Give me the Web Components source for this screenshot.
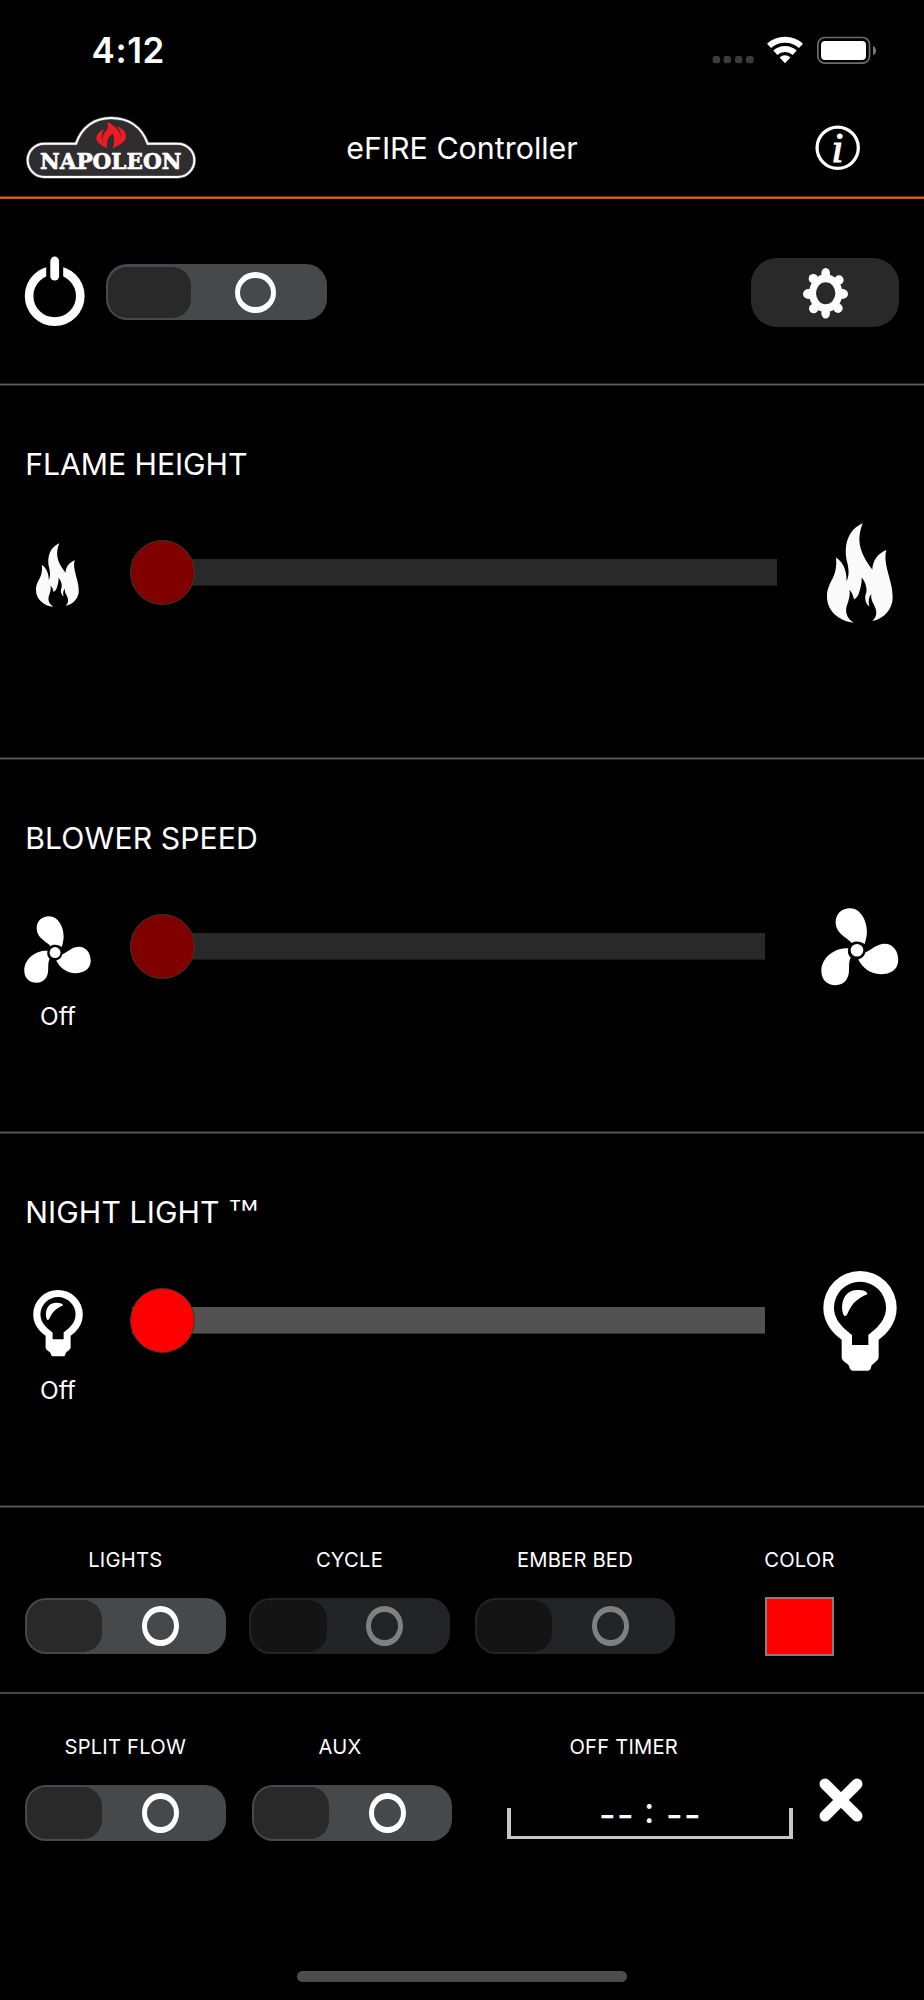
<!DOCTYPE html>
<html lang="en">
<head>
<meta charset="utf-8">
<title>eFIRE Controller</title>
<style>
html,body{margin:0;background:#000}
body{width:924px;height:2000px;overflow:hidden;font-family:Inter,"Liberation Sans",sans-serif;color:#fff}
</style>
</head>
<body>
<efire-app></efire-app>
<script>
const define = (name, html, setup) => customElements.define(name, class extends HTMLElement {
  constructor() {
    super();
    const t = document.createElement('template');
    t.innerHTML = html;
    this.attachShadow({mode: 'open'}).append(t.content.cloneNode(true));
  }
  connectedCallback() { if (setup) setup(this); }
});

const ICONS = {
  flame: ['309 66 198 301', '<path fill="#fafafa" d="M416 67C400 110 400 148 445 206C446 180 460 158 487 147C475 190 507 240 506 290C506 325 480 354 445 361C462 345 458 330 450 312C444 302 440 292 442 280C434 290 432 302 436 317C424 308 420 290 427 275C430 260 422 240 413 230C414 250 408 265 405 277C402 287 396 293 390 296C388 285 384 275 376 267C380 285 373 300 367 320C364 340 372 355 389 366C345 362 309 330 309 288C309 240 342 235 336 170C355 182 368 205 368 241C375 225 375 210 371 190C355 130 375 85 416 67Z"/>'],
  fan: ['291 82 233 233', '<path d="M383 187C372 172 335 160 335 125C335 100 353 83 378 83C412 83 430 125 429 155C428 170 425 182 422 190C410 181 393 180 383 187ZM424 216C445 205 460 189 482 189C508 189 523 212 523 238C523 266 500 281 470 281C440 281 415 262 403 237C415 233 422 226 424 216ZM373 203C340 200 292 225 292 272C292 298 310 314 335 314C360 314 375 295 375 270C376 255 374 245 380 231C372 224 370 213 373 203Z"/><circle cx="399" cy="209" r="19"/>'],
  bulb: ['297 60 222 300', '<path fill-rule="evenodd" d="M353 266C325 245 298 215 298 170A110 110 0 0 1 518 170C518 215 492 245 464 266V318C464 330 445 338 442 345Q440 359 432 359H386Q378 359 375 345C370 335 353 332 353 318ZM384 282H433V252C445 240 486 215 486 170A78 78 0 0 0 330 170C330 215 372 240 384 252Z"/><path d="M362 195C350 185 346 118 400 117C420 117 430 121 430 130C400 143 385 155 370 189Q367 196 362 195Z"/>'],
  power: ['0 0 60 71', '<circle cx="29.7" cy="40" r="25.6" fill="none" stroke="#fff" stroke-width="8.6"/><rect x="21.2" y="0" width="17" height="28" fill="#000"/><rect x="25.3" y=".6" width="8.8" height="24" rx="4.4"/>'],
  gear: ['237 85 135 152', '<ellipse cx="305" cy="161" rx="50" ry="57"/><ellipse cx="305" cy="101" rx="13" ry="16"/><ellipse cx="305" cy="221" rx="13" ry="16"/><ellipse cx="254" cy="163" rx="17" ry="15"/><ellipse cx="355" cy="163" rx="17" ry="15"/><circle cx="268" cy="117" r="14"/><circle cx="345" cy="121" r="14"/><circle cx="269" cy="207" r="14"/><circle cx="342" cy="206" r="14"/><ellipse cx="305" cy="161" rx="29" ry="33" fill="#292929"/>'],
  close: ['0 0 44 44', '<path d="M6 6L38 38M38 6L6 38" stroke="#fff" stroke-width="11" stroke-linecap="round"/>'],
  info: ['0 0 46 46', '<circle cx="23" cy="23" r="20.9" fill="none" stroke="#fff" stroke-width="3.3"/><text x="16.8" y="37.4" font-family="Liberation Serif,serif" font-style="italic" font-size="43" stroke="#fff" stroke-width="1.2">i</text>'],
  status: ['750 108 494 84', '<g fill="#3b3b3b"><rect x="752" y="168" width="22" height="22" rx="7"/><rect x="785" y="168" width="22" height="22" rx="7"/><rect x="819" y="168" width="22" height="22" rx="7"/><rect x="852" y="168" width="23" height="22" rx="7"/></g><g fill="none" stroke="#fff" stroke-width="18"><path d="M921.1 137.6A71 71 0 0 1 1016.9 137.6"/><path d="M940 158.3A43 43 0 0 1 998 158.3"/></g><path d="M969 190L952.8 172.3A24 24 0 0 1 985.2 172.3Z"/><rect x="1067.5" y="112.5" width="155" height="77" rx="21" fill="none" stroke="#6c6c6c" stroke-width="5"/><rect x="1077" y="123" width="135" height="57" rx="12"/><path d="M1233 138Q1242 142 1242 152T1233 165Z" fill="#777"/>'],
  logo: ['75 345 518 195', '<path d="M228 431C245 380 285 354 333 354C385 354 425 380 443 431H533A50 50 0 0 1 533 531H133A50 50 0 0 1 133 431Z" fill="#2f2d2f" stroke="#5a5a5a" stroke-width="10"/><path d="M228 431C245 380 285 354 333 354C385 354 425 380 443 431H533A50 50 0 0 1 533 531H133A50 50 0 0 1 133 431Z" fill="none" stroke="#fff" stroke-width="6"/><path fill="#ec1c24" d="M322 366C345 375 368 400 362 420C358 435 345 440 338 448C342 435 345 415 338 402C322 410 318 430 323 444C310 438 305 425 308 410C312 395 330 390 322 366ZM312 388C295 395 285 410 290 420C295 430 308 440 318 443C305 430 300 410 312 388ZM350 378C370 385 380 400 378 412C376 425 360 435 347 440C362 425 372 405 350 378Z"/><text x="120" y="507" textLength="424" lengthAdjust="spacingAndGlyphs" font-family="DejaVu Serif,serif" font-weight="700" font-size="65" stroke="#fff" stroke-width="2">NAPOLEON</text>']
};

define('efire-icon', `<style>:host{display:block;flex:none}svg{display:block;width:100%;height:100%;fill:#fff;overflow:visible}</style><svg preserveAspectRatio="none"></svg>`, el => {
  const [box, art] = ICONS[el.getAttribute('name')];
  const svg = el.shadowRoot.querySelector('svg');
  svg.setAttribute('viewBox', box);
  svg.innerHTML = art;
});

define('efire-toggle', `<style>
:host{display:flex;box-sizing:border-box;width:var(--w,200.5px);height:56px;padding:2.2px;background:#46494b;border-radius:21px;align-items:stretch;flex:none}
:host([disabled]){opacity:.5}
.knob{width:var(--knob,75.3px);background:#292929;border-radius:19px;flex:none}
.off{flex:1;display:flex;align-items:center;padding-left:var(--gap,39.7px)}
.ring{box-sizing:border-box;width:var(--ring,37px);height:40.5px;border:solid #fff;border-width:6px 5.6px;border-radius:50%}
</style><div class="knob"></div><div class="off"><div class="ring"></div></div>`);

define('efire-slider', `<style>
:host{display:flex;align-items:center;box-sizing:border-box;height:65px;width:var(--w,633px);margin:0 0 0 40px;background:linear-gradient(90deg,var(--start,var(--track,#292929)) 20px,var(--track,#292929) 20px) center/100% 26.6px no-repeat}
.thumb{box-sizing:border-box;width:65px;height:65px;border-radius:50%;border:1px solid #3d3a2c;background:var(--thumb,#800000);margin-left:-2px;flex:none}
</style><div class="thumb"></div>`);

define('efire-range', `<style>
:host{display:block;box-sizing:border-box;height:374px;padding:59.5px 25px 0;background:linear-gradient(#242424 1px,#5e5e5e 1px 2px,#242424 2px) bottom/100% 3px no-repeat}
h2{margin:0 0 41px 0;font-size:30.2px;font-weight:400;line-height:36px;white-space:nowrap;letter-spacing:var(--ls,0)}
h2 slot{display:block;margin-left:.2px}
.row{display:grid;grid-template-columns:67px 729px 78px;height:100px;align-items:center}
.state{width:66px;margin-top:4px;text-align:center;font-size:24.4px;line-height:30px}
</style><h2><slot></slot></h2><div class="row"><slot name="min"></slot><slot name="slider"></slot><slot name="max"></slot></div><div class="state"><slot name="state"></slot></div>`);

define('efire-field', `<style>
:host{display:flex;flex-direction:column;align-items:center;width:var(--cell,200.5px);flex:none}
.label{box-sizing:border-box;font-size:20.2px;line-height:24px;letter-spacing:.2px;white-space:nowrap;width:100%;text-align:center;padding-right:var(--shift,0);margin-bottom:26.3px}
</style><div class="label"><slot name="label"></slot></div><slot></slot>`);

define('efire-timer', `<style>
:host{display:flex;box-sizing:border-box;width:286px;height:30.5px;margin-top:23.2px;border:4px solid #c6c6c6;border-top:0;border-bottom-width:3.5px;justify-content:center;align-items:center;font-size:36px;line-height:30px;gap:10.5px}
span{margin-top:-20px}
.dash{padding-top:6px;letter-spacing:1.4px;font-weight:500}
.colon{padding-bottom:4px;margin-left:-1.5px;margin-right:1px}
.dash:last-child{margin-right:-1.4px}
</style><span class="dash">--</span><span class="colon">:</span><span class="dash">--</span>`);

define('efire-app', `<style>
:host{display:flex;flex-direction:column;width:924px;height:2000px;background:#000}
.status{display:flex;height:100px;box-sizing:border-box;padding:36px 47px 0 91.5px;justify-content:space-between}
.time{font-size:35px;line-height:29px;font-weight:600;letter-spacing:.6px}
.status efire-icon{width:164.7px;height:28px}
header{display:grid;grid-template-columns:172.7px 1fr 172.7px;height:99px;box-sizing:border-box;padding:0 25px 3px;align-items:center;background:linear-gradient(#5c2600 1px,#f56a06 1px 2px,#c94800 2px) bottom/100% 3px no-repeat}
header efire-icon[name=logo]{width:172.7px;height:65px;margin-top:-2px}
h1{margin:0;font-size:30.4px;line-height:36px;font-weight:400;text-align:center}
header efire-icon[name=info]{width:45.4px;height:45.4px;justify-self:end;margin-right:39px}
.power{display:flex;height:187px;box-sizing:border-box;padding:58px 25px 0 24.5px;background:linear-gradient(#242424 1px,#5e5e5e 1px 2px,#242424 2px) bottom/100% 3px no-repeat}
.power efire-icon[name=power]{width:60px;height:71px;margin:-.6px 21.5px 0 0}
.power efire-toggle{--w:221.3px;--knob:83.3px;--gap:44px;--ring:40.5px;margin-top:7.4px}
.settings{display:flex;width:148px;height:69.5px;border-radius:26px;background:#292929;margin:.6px 0 0 auto;align-items:center;justify-content:center}
.settings efire-icon{width:45px;height:50.6px;margin-top:2px}
.row{display:flex;box-sizing:border-box;height:186px;padding:39.7px 25px 0}
.row.last{padding-top:40.8px}
.lights{background:linear-gradient(#464646,#464646) bottom/100% 2px no-repeat}
.swatch{box-sizing:border-box;width:69px;height:59px;margin-top:-.9px;border:2px solid #808080;background:#f00}
.home{width:330px;height:11px;border-radius:6px;background:#4c4c4c;margin:91px auto 0}
.tm{display:inline-block;font-size:41px;font-weight:300;line-height:0;vertical-align:-7.6px;letter-spacing:0;transform:scaleX(1.24);transform-origin:0 0}
</style>
<div class="status"><div class="time">4:12</div><efire-icon name="status"></efire-icon></div>
<header><efire-icon name="logo"></efire-icon><h1>eFIRE Controller</h1><efire-icon name="info"></efire-icon></header>
<div class="power"><efire-icon name="power"></efire-icon><efire-toggle></efire-toggle><div class="settings"><efire-icon name="gear"></efire-icon></div></div>
<efire-range style="--ls:-.05px">FLAME HEIGHT
<efire-icon slot="min" name="flame" style="width:43px;height:64px;margin:5px 0 0 11px"></efire-icon>
<efire-slider slot="slider" style="--w:645px;--start:#800000"></efire-slider>
<efire-icon slot="max" name="flame" style="width:66px;height:100px;margin-left:6px"></efire-icon></efire-range>
<efire-range style="--ls:.1px">BLOWER SPEED
<efire-icon slot="min" name="fan" style="width:67px;height:67px;margin:5px 0 0 -.8px"></efire-icon>
<efire-slider slot="slider"></efire-slider>
<efire-icon slot="max" name="fan" style="width:77.6px;height:77.6px"></efire-icon><span slot="state">Off</span></efire-range>
<efire-range style="--ls:.1px">NIGHT LIGHT <span class="tm">™</span>
<efire-icon slot="min" name="bulb" style="width:50px;height:66.5px;margin:5px 0 0 8px"></efire-icon>
<efire-slider slot="slider" style="--track:#525252;--thumb:#f00"></efire-slider>
<efire-icon slot="max" name="bulb" style="width:74px;height:100px;margin-left:2px"></efire-icon><span slot="state">Off</span></efire-range>
<div class="row lights">
<efire-field><span slot="label">LIGHTS</span><efire-toggle></efire-toggle></efire-field>
<efire-field style="margin-left:23.7px"><span slot="label">CYCLE</span><efire-toggle disabled></efire-toggle></efire-field>
<efire-field style="margin-left:25px"><span slot="label">EMBER BED</span><efire-toggle disabled></efire-toggle></efire-field>
<efire-field style="margin-left:24px"><span slot="label">COLOR</span><div class="swatch"></div></efire-field>
</div>
<div class="row last">
<efire-field><span slot="label">SPLIT FLOW</span><efire-toggle></efire-toggle></efire-field>
<efire-field style="margin-left:26.2px;--shift:24px"><span slot="label">AUX</span><efire-toggle></efire-toggle></efire-field>
<efire-field style="--cell:286px;--shift:52px;margin-left:54.6px"><span slot="label">OFF TIMER</span><efire-timer></efire-timer></efire-field>
<efire-icon name="close" style="width:44px;height:44px;margin:43.4px 0 0 26.6px"></efire-icon>
</div>
<div class="home"></div>`);
</script>
</body>
</html>
